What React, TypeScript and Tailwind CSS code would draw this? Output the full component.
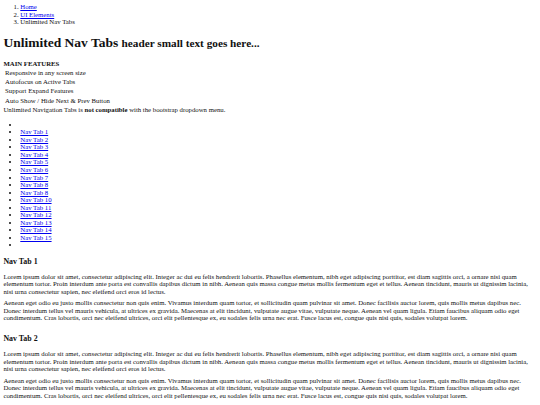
import React from 'react';

const features = [
  'Responsive in any screen size',
  'Autofocus on Active Tabs',
  'Support Expand Features',
  'Auto Show / Hide Next & Prev Button',
];

const tabs = [
  'Nav Tab 1',
  'Nav Tab 2',
  'Nav Tab 3',
  'Nav Tab 4',
  'Nav Tab 5',
  'Nav Tab 6',
  'Nav Tab 7',
  'Nav Tab 8',
  'Nav Tab 8',
  'Nav Tab 10',
  'Nav Tab 11',
  'Nav Tab 12',
  'Nav Tab 13',
  'Nav Tab 14',
  'Nav Tab 15',
];

const LOREM_1 =
  'Lorem ipsum dolor sit amet, consectetur adipiscing elit. Integer ac dui eu felis hendrerit lobortis. Phasellus elementum, nibh eget adipiscing porttitor, est diam sagittis orci, a ornare nisi quam elementum tortor. Proin interdum ante porta est convallis dapibus dictum in nibh. Aenean quis massa congue metus mollis fermentum eget et tellus. Aenean tincidunt, mauris ut dignissim lacinia, nisi urna consectetur sapien, nec eleifend orci eros id lectus.';

const LOREM_2 =
  'Aenean eget odio eu justo mollis consectetur non quis enim. Vivamus interdum quam tortor, et sollicitudin quam pulvinar sit amet. Donec facilisis auctor lorem, quis mollis metus dapibus nec. Donec interdum tellus vel mauris vehicula, at ultrices ex gravida. Maecenas at elit tincidunt, vulputate augue vitae, vulputate neque. Aenean vel quam ligula. Etiam faucibus aliquam odio eget condimentum. Cras lobortis, orci nec eleifend ultrices, orci elit pellentesque ex, eu sodales felis urna nec erat. Fusce lacus est, congue quis nisi quis, sodales volutpat lorem.';

const TabPanel = ({ title, first }: { title: string; first?: boolean }) => (
  <div>
    <h3
      className={
        first
          ? 'mt-[8.2px] mb-[6.4px] text-[7.9px] leading-[9.1px] font-bold'
          : 'mt-[12.8px] mb-[6.8px] text-[7.9px] leading-[9.1px] font-bold'
      }
    >
      {title}
    </h3>
    <p className="mb-[4.2px] leading-[7.45px]">{LOREM_1}</p>
    <p className="mb-[4.2px] leading-[7.45px]">{LOREM_2}</p>
  </div>
);

const App = () => {
  return (
    <div className="min-h-screen bg-white text-[#111]">
      <div className="p-[3.4px] text-[6.75px] leading-[7.6px] font-['Liberation_Serif','Times_New_Roman',serif]">
        {/* Breadcrumb */}
        <ol className="list-decimal pl-[16.9px] leading-[7.55px]">
          <li>
            <a href="#" className="text-[#0000ee] underline">Home</a>
          </li>
          <li>
            <a href="#" className="text-[#0000ee] underline">UI Elements</a>
          </li>
          <li>Unlimited Nav Tabs</li>
        </ol>

        <h1 className="mt-[9px] mb-[7px] text-[13.5px] leading-[15.5px] font-bold">
          Unlimited Nav Tabs <small className="text-[11.25px]">header small text goes here...</small>
        </h1>

        {/* Features */}
        <div className="leading-[9.3px]">
          <div className="font-bold">MAIN FEATURES</div>
          {features.map((f) => (
            <div key={f} className="pl-[1.7px]">{f}</div>
          ))}
          <div>
            Unlimited Navigation Tabs is <strong>not compatible</strong> with the bootstrap dropdown menu.
          </div>
        </div>

        {/* Nav tabs */}
        <ul className="mt-[6.4px] list-disc pl-[16.9px] leading-[7.55px]">
          <li>&nbsp;</li>
          {tabs.map((t, i) => (
            <li key={i}>
              <a href="#" className="text-[#0000ee] underline">{t}</a>
            </li>
          ))}
          <li>&nbsp;</li>
        </ul>

        <TabPanel title="Nav Tab 1" first />
        <TabPanel title="Nav Tab 2" />
      </div>
    </div>
  );
};

export default App;
